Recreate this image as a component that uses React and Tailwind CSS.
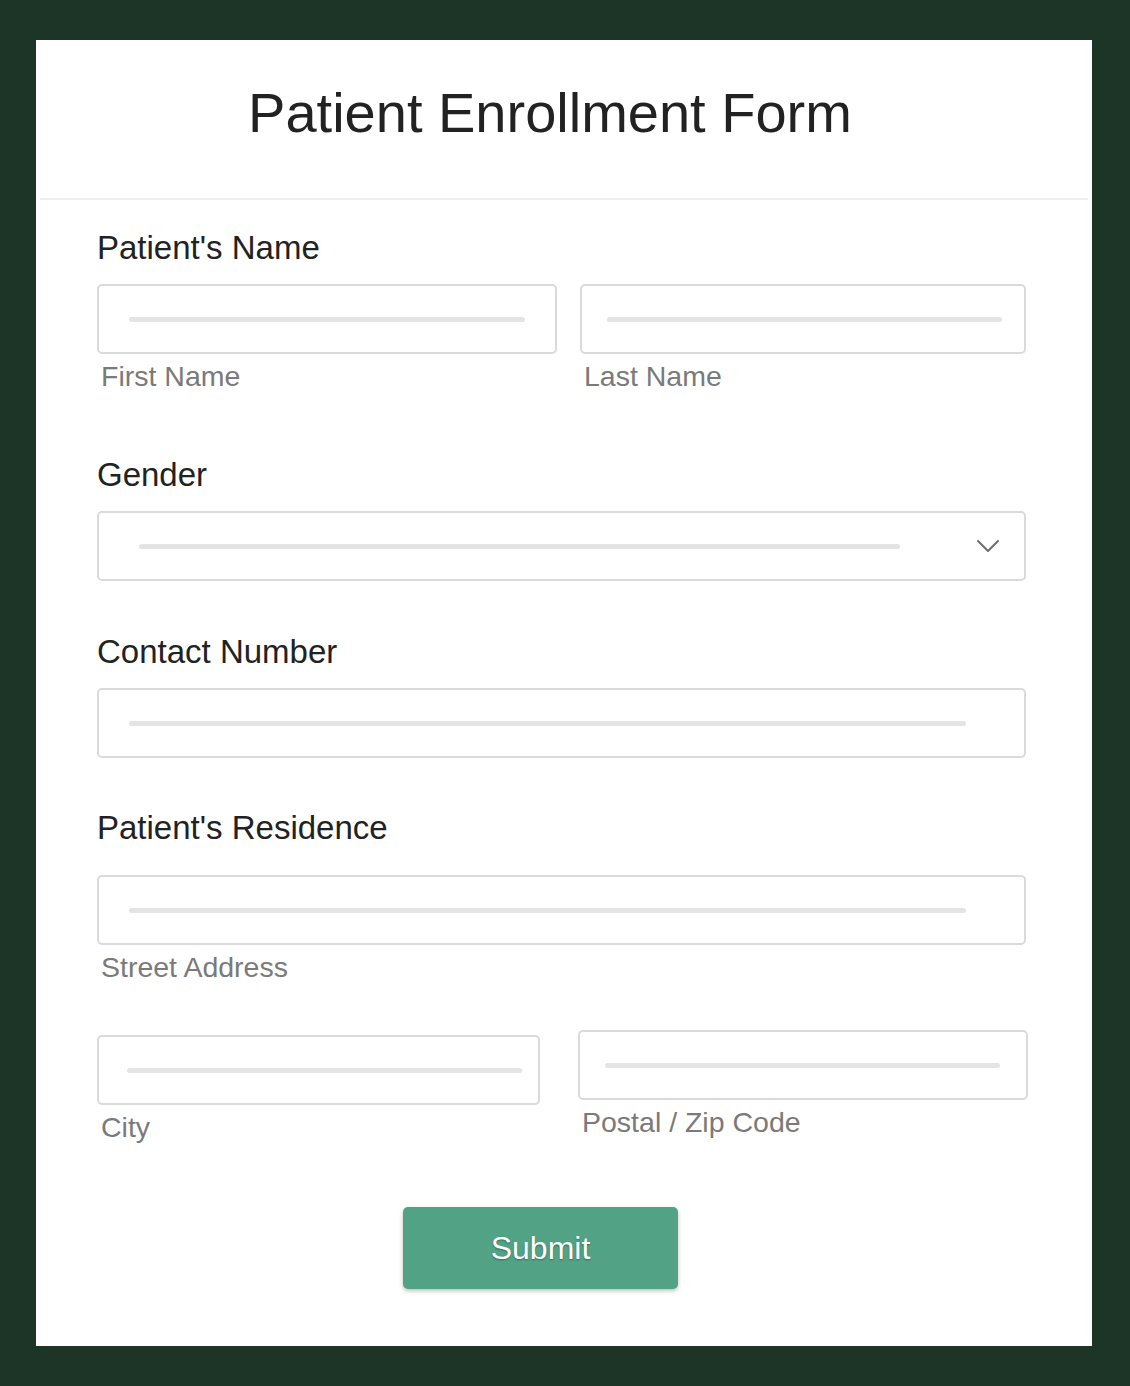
import React from "react";

const Bar = ({ className }) => (
  <div className={`h-[5px] rounded-full bg-[#e4e4e4] ${className}`} />
);

const Box = ({ barClass, children }) => (
  <div className="flex h-[70px] items-center rounded-[5px] border-2 border-[#dadada] bg-white">
    <Bar className={barClass} />
    {children}
  </div>
);

const Label = ({ children, className = "" }) => (
  <div className={`text-[33px] leading-none text-[#222222] ${className}`}>
    {children}
  </div>
);

const SubLabel = ({ children, className = "" }) => (
  <div className={`mt-[8px] pl-[4px] text-[28.5px] leading-[29px] text-[#7a7a7a] ${className}`}>
    {children}
  </div>
);

const App = () => {
  return (
    <div
      className="min-h-[1386px] bg-[#1d3526] pb-[40px] pl-[36px] pr-[38px] pt-[40px]"
      style={{ fontFamily: '"Liberation Sans", Arial, sans-serif' }}
    >
      <div className="flex h-[1306px] flex-col bg-white">
        <div className="h-[158px] pr-[28px] pt-[45px] text-center">
          <h1 className="text-[56px] leading-none text-[#222222]">
            Patient Enrollment Form
          </h1>
        </div>
        <div className="mx-[4px] h-[2px] bg-[#eeeeee]" />

        <div className="pl-[61px] pr-[66px] pt-[31px]">
          <Label>Patient's Name</Label>
          <div className="mt-[20px] grid grid-cols-[460px_446px] gap-[23px]">
            <div>
              <Box barClass="ml-[30px] mr-[30px] flex-1" />
              <SubLabel>First Name</SubLabel>
            </div>
            <div>
              <Box barClass="ml-[25px] mr-[22px] flex-1" />
              <SubLabel>Last Name</SubLabel>
            </div>
          </div>

          <Label className="mt-[67px]">Gender</Label>
          <div className="mt-[20px]">
            <Box barClass="ml-[40px] flex-1">
              <div className="flex w-[124px] justify-end pr-[24px]">
                <svg width="24" height="14" viewBox="0 0 24 14" fill="none">
                  <polyline
                    points="2,2 12,12 22,2"
                    stroke="#6f6f6f"
                    strokeWidth="2"
                    strokeLinecap="round"
                    strokeLinejoin="round"
                  />
                </svg>
              </div>
            </Box>
          </div>

          <Label className="mt-[54px]">Contact Number</Label>
          <div className="mt-[20px]">
            <Box barClass="ml-[30px] mr-[58px] flex-1" />
          </div>

          <Label className="mt-[53px]">Patient's Residence</Label>
          <div className="mt-[31px]">
            <Box barClass="ml-[30px] mr-[58px] flex-1" />
            <SubLabel>Street Address</SubLabel>
          </div>

          <div className="mt-[48px] grid grid-cols-[443px_450px] items-start gap-[38px]">
            <div className="mt-[5px]">
              <Box barClass="ml-[28px] mr-[16px] flex-1" />
              <SubLabel>City</SubLabel>
            </div>
            <div>
              <Box barClass="ml-[25px] mr-[26px] flex-1" />
              <SubLabel>Postal / Zip Code</SubLabel>
            </div>
          </div>

          <div className="mt-[65px]">
            <button
              type="button"
              className="ml-[306px] flex h-[82px] w-[275px] items-center justify-center rounded-[5px] bg-[#52a386] text-[32px] leading-none text-white shadow-[0_2px_4px_rgba(0,0,0,0.25)] [text-shadow:0_1px_2px_rgba(0,0,0,0.35)]"
            >
              Submit
            </button>
          </div>
        </div>
      </div>
    </div>
  );
};

export default App;
